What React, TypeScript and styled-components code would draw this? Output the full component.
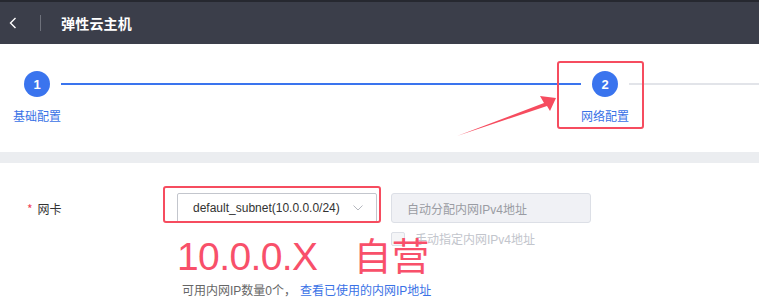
import React from 'react';
import styled, { createGlobalStyle } from 'styled-components';

const GlobalStyle = createGlobalStyle`
  html, body {
    margin: 0;
    padding: 0;
    background: #fff;
    font-family: "Liberation Sans", "Noto Sans CJK SC", sans-serif;
  }
`;

const Page = styled.div`
  width: 759px;
  height: 304px;
  overflow: hidden;
  position: relative;
  background: #fff;
`;

const Header = styled.div`
  height: 42px;
  border-top: 2px solid #262830;
  background: #3b3e4a;
  display: flex;
  align-items: center;
  color: #fff;
`;

const Back = styled.div`
  width: 40px;
  height: 42px;
  display: flex;
  align-items: center;
  padding-left: 9px;
  box-sizing: border-box;
`;

const Divider = styled.div`
  width: 1px;
  height: 16px;
  background: #6e717b;
`;

const Title = styled.div`
  margin-left: 20px;
  font-size: 14px;
  font-weight: bold;
  letter-spacing: 0.2px;
`;

const Steps = styled.div`
  height: 108px;
  box-sizing: border-box;
  padding: 27px 0 0 13px;
  display: flex;
  align-items: flex-start;
`;

const Step = styled.div`
  position: relative;
  width: 48px;
  display: flex;
  flex-direction: column;
  align-items: center;
`;

const Circle = styled.div`
  width: 26px;
  height: 26px;
  border-radius: 50%;
  background: #3a74ee;
  color: #fff;
  font-size: 13px;
  font-weight: bold;
  display: flex;
  align-items: center;
  justify-content: center;
`;

const StepLabel = styled.div`
  margin-top: 12px;
  font-size: 12px;
  line-height: 17px;
  color: #3a72e6;
  white-space: nowrap;
`;

const Line = styled.div<{ $done?: boolean }>`
  flex: ${p => (p.$done ? '0 0 520px' : '1')};
  height: 2px;
  margin-top: 12px;
  background: ${p => (p.$done ? '#3a74ee' : '#e2e4e9')};
`;

const Mark = styled.div`
  position: absolute;
  left: -24px;
  top: -10px;
  width: 87px;
  height: 68px;
  box-sizing: border-box;
  border: 2px solid #f64c5f;
  border-radius: 3px;
`;

const Band = styled.div`
  height: 11px;
  background: #ebedf0;
`;

const Form = styled.div`
  position: relative;
  padding: 30px 0 0 27px;
  display: flex;
  align-items: flex-start;
`;

const Label = styled.div`
  width: 150px;
  height: 30px;
  display: flex;
  align-items: center;
  font-size: 12px;
  color: #333;
  font-family: "Noto Sans CJK SC", sans-serif;
`;

const Star = styled.span`
  color: #f0445a;
  margin-right: 5px;
  font-size: 12px;
`;

const Fields = styled.div`
  display: flex;
  flex-direction: column;
`;

const FieldRow = styled.div`
  display: flex;
  gap: 14px;
`;

const Select = styled.div`
  position: relative;
  width: 200px;
  height: 30px;
  box-sizing: border-box;
  border: 1px solid #c3c6cd;
  border-radius: 2px;
  padding: 0 13px 0 15px;
  display: flex;
  align-items: center;
  justify-content: space-between;
  font-size: 12px;
  color: #333;
`;

const Input = styled.div`
  width: 200px;
  height: 30px;
  box-sizing: border-box;
  border: 1px solid #dcdfe6;
  border-radius: 3px;
  background: #f0f1f5;
  padding-left: 15px;
  display: flex;
  align-items: center;
  font-size: 12px;
  color: #9a9ca3;
`;

const Column = styled.div`
  display: flex;
  flex-direction: column;
`;

const CheckRow = styled.label`
  margin-top: 7px;
  display: flex;
  align-items: center;
  gap: 10px;
  font-size: 12px;
  color: #c2c5cc;
`;

const Box = styled.span`
  width: 14px;
  height: 14px;
  box-sizing: border-box;
  border: 1px solid #dcdfe6;
  border-radius: 2px;
  background: #f4f5f7;
`;

const Hint = styled.div`
  margin: 34px 0 0 5px;
  font-size: 12px;
  color: #666;
  white-space: nowrap;
`;

const Link = styled.a`
  color: #3a72e6;
  margin-left: 4px;
  text-decoration: none;
`;

const SelectMark = styled.div`
  position: absolute;
  left: 163px;
  top: 23px;
  width: 218px;
  height: 37px;
  box-sizing: border-box;
  border: 2px solid #f64c5f;
  border-radius: 3px;
`;

const BigNote = styled.div`
  position: absolute;
  left: 177px;
  top: 68px;
  display: flex;
  align-items: baseline;
  gap: 36px;
  line-height: 46px;
  color: #f8506a;
  white-space: nowrap;
`;

const NoteText = styled.span<{ $cjk?: boolean }>`
  font-size: ${p => (p.$cjk ? '38px' : '39px')};
  letter-spacing: ${p => (p.$cjk ? '0' : '-0.6px')};
  font-family: ${p => (p.$cjk ? '"Noto Sans CJK SC", sans-serif' : '"Liberation Sans", sans-serif')};
`;

const Arrow = styled.svg`
  position: absolute;
  left: 0;
  top: 0;
  pointer-events: none;
`;

export default function App() {
  return (
    <>
      <GlobalStyle />
      <Page>
        <Header>
          <Back>
            <svg width="8" height="12" viewBox="0 0 8 12">
              <path d="M6.5 1 L1.5 6 L6.5 11" fill="none" stroke="#fff" strokeWidth="1.4" />
            </svg>
          </Back>
          <Divider />
          <Title>弹性云主机</Title>
        </Header>

        <Steps>
          <Step>
            <Circle>1</Circle>
            <StepLabel>基础配置</StepLabel>
          </Step>
          <Line $done />
          <Step>
            <Circle>2</Circle>
            <StepLabel>网络配置</StepLabel>
            <Mark />
          </Step>
          <Line />
        </Steps>

        <Band />

        <Form>
          <Label>
            <Star>*</Star>网卡
          </Label>
          <Fields>
            <FieldRow>
              <Select>
                default_subnet(10.0.0.0/24)
                <svg width="10" height="6" viewBox="0 0 10 6">
                  <path d="M0.5 0.5 L5 5 L9.5 0.5" fill="none" stroke="#b4b7be" strokeWidth="1" />
                </svg>
              </Select>
              <Column>
                <Input>自动分配内网IPv4地址</Input>
                <CheckRow>
                  <Box />
                  手动指定内网IPv4地址
                </CheckRow>
              </Column>
            </FieldRow>
            <Hint>
              可用内网IP数量0个，
              <Link href="#">查看已使用的内网IP地址</Link>
            </Hint>
          </Fields>
          <SelectMark />
          <BigNote>
            <NoteText>10.0.0.X</NoteText>
            <NoteText $cjk>自营</NoteText>
          </BigNote>
        </Form>

        <Arrow width="759" height="304" viewBox="0 0 759 304">
          <polygon
            points="457,136 544,103 540,96 556,98 550,111 547,106"
            fill="#f64c5f"
          />
        </Arrow>
      </Page>
    </>
  );
}
